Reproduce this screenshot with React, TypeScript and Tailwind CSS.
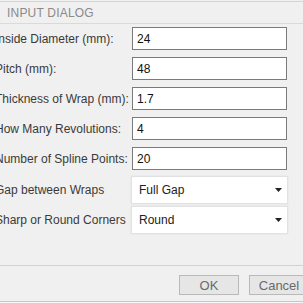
import React from 'react'

const font = { fontFamily: '"Liberation Sans", Arial, sans-serif' }

const fields = [
  { label: 'Inside Diameter (mm):', value: '24' },
  { label: 'Pitch (mm):', value: '48' },
  { label: 'Thickness of Wrap (mm):', value: '1.7' },
  { label: 'How Many Revolutions:', value: '4' },
  { label: 'Number of Spline Points:', value: '20' },
]

const selects = [
  { label: 'Gap between Wraps', value: 'Full Gap' },
  { label: 'Sharp or Round Corners', value: 'Round' },
]

const Caret = () => (
  <svg width="7" height="4" viewBox="0 0 7 4" className="mr-[5px]">
    <path d="M0 0h7L3.5 4z" fill="#222" />
  </svg>
)

export default function App() {
  return (
    <div
      className="w-[303px] h-[303px] overflow-hidden bg-[#f0f0f0] flex flex-col text-[12px]"
      style={font}
    >
      <div className="h-[1px] bg-[#d4d4d4] mt-[1px]" />
      <div className="h-[21px] flex items-center pl-[7px] text-[#8a8a8a] tracking-[0.2px]">
        INPUT DIALOG
      </div>
      <div className="h-[1px] bg-[#dadada]" />

      <div className="flex flex-col gap-[7px] pt-[3px] -ml-[5px]">
        {fields.map((f) => (
          <div key={f.label} className="flex items-center h-[23px]">
            <div className="w-[137px] text-[#3a3a3a] whitespace-nowrap">{f.label}</div>
            <div className="w-[155px] h-[23px] border border-[#7a7a7a] bg-white flex items-center pl-[4px] text-[#111]">
              {f.value}
            </div>
          </div>
        ))}
      </div>

      <div className="flex flex-col gap-[2px] mt-[6px] -ml-[5px]">
        {selects.map((s) => (
          <div key={s.label} className="flex items-center h-[28px]">
            <div className="w-[136px] text-[#3a3a3a] whitespace-nowrap">{s.label}</div>
            <div className="w-[157px] h-[28px] border border-[#e2e2e2] shadow-[0_0_1px_rgba(0,0,0,0.12)] bg-white flex items-center justify-between pl-[7px] text-[#222]">
              <span>{s.value}</span>
              <Caret />
            </div>
          </div>
        ))}
      </div>

      <div className="mt-[31px] h-[1px] bg-[#d2d2d2]" />
      <div className="flex gap-[10px] pl-[179px] pt-[9px] h-[35px]">
        <button className="w-[60px] h-[20px] shrink-0 border border-[#b9b9b9] bg-[#e6e6e6] text-[#6a6a6a] text-[13px] leading-none">
          OK
        </button>
        <button className="w-[60px] h-[20px] shrink-0 border border-[#b9b9b9] bg-[#e6e6e6] text-[#6a6a6a] text-[13px] leading-none">
          Cancel
        </button>
      </div>
      <div className="h-[1px] bg-[#c8c8c8]" />
      <div className="flex-1 bg-[#f7f7f7]" />
    </div>
  )
}
